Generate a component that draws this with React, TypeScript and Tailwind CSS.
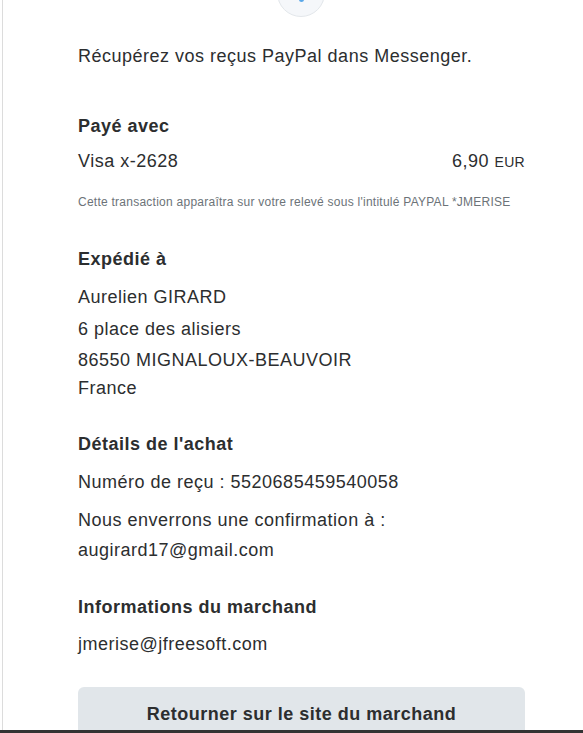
import * as React from "react"

const sans = "font-['Liberation_Sans',Arial,sans-serif]"

function Heading({ children, className = "" }: { children: React.ReactNode; className?: string }) {
  return (
    <div className={`text-[18px] leading-[24px] tracking-[0.5px] font-bold text-[#2c2e2f] ${className}`}>
      {children}
    </div>
  )
}

function Line({ children, className = "" }: { children: React.ReactNode; className?: string }) {
  return <div className={`text-[18px] leading-[24px] tracking-[0.5px] text-[#2c2e2f] ${className}`}>{children}</div>
}

export default function App() {
  return (
    <div className={`h-[733px] w-[583px] flex flex-col overflow-hidden bg-white ${sans}`}>
      <div className="flex-1 min-h-0 overflow-hidden ml-[2px] border-l border-[#dcdcdc] relative">
        {/* icon bubble, mostly scrolled out of view */}
        <div className="absolute left-[274px] top-[-31px] h-[48px] w-[48px] rounded-full bg-[#f5f7fa] border border-[#e3e7eb] flex items-end justify-center pb-[14px]">
          <div className="h-[4px] w-[5px] rounded-b-full bg-[#5aa7e8]" />
        </div>

        <div className="pl-[75px] pr-[58px] pt-[44px]">
          <Line>Récupérez vos reçus PayPal dans Messenger.</Line>

          <Heading className="mt-[46px]">Payé avec</Heading>
          <div className="mt-[11px] flex items-baseline justify-between text-[18px] leading-[24px] tracking-[0.5px] text-[#2c2e2f]">
            <span>Visa x-2628</span>
            <span>
              6,90 <span className="text-[14px] tracking-[0.3px]">EUR</span>
            </span>
          </div>
          <div className="mt-[20px] text-[12px] leading-[16px] tracking-[0.25px] text-[#6c7378]">
            Cette transaction apparaîtra sur votre relevé sous l'intitulé PAYPAL *JMERISE
          </div>

          <Heading className="mt-[37px]">Expédié à</Heading>
          <Line className="mt-[14px]">Aurelien GIRARD</Line>
          <Line className="mt-[8px]">6 place des alisiers</Line>
          <Line className="mt-[7px]">86550 MIGNALOUX-BEAUVOIR</Line>
          <Line className="mt-[4px]">France</Line>

          <Heading className="mt-[32px]">Détails de l'achat</Heading>
          <Line className="mt-[14px]">Numéro de reçu : 5520685459540058</Line>
          <Line className="mt-[14px]">Nous enverrons une confirmation à :</Line>
          <Line className="mt-[6px]">augirard17@gmail.com</Line>

          <Heading className="mt-[33px]">Informations du marchand</Heading>
          <Line className="mt-[13px]">jmerise@jfreesoft.com</Line>

          <button className="mt-[31px] w-full h-[54px] rounded-[6px] bg-[#e1e6ea] text-[18px] tracking-[0.5px] font-bold text-[#2c2e2f]">
            Retourner sur le site du marchand
          </button>
        </div>
      </div>
      <div className="h-[3px] shrink-0 bg-[#333333]" />
    </div>
  )
}
